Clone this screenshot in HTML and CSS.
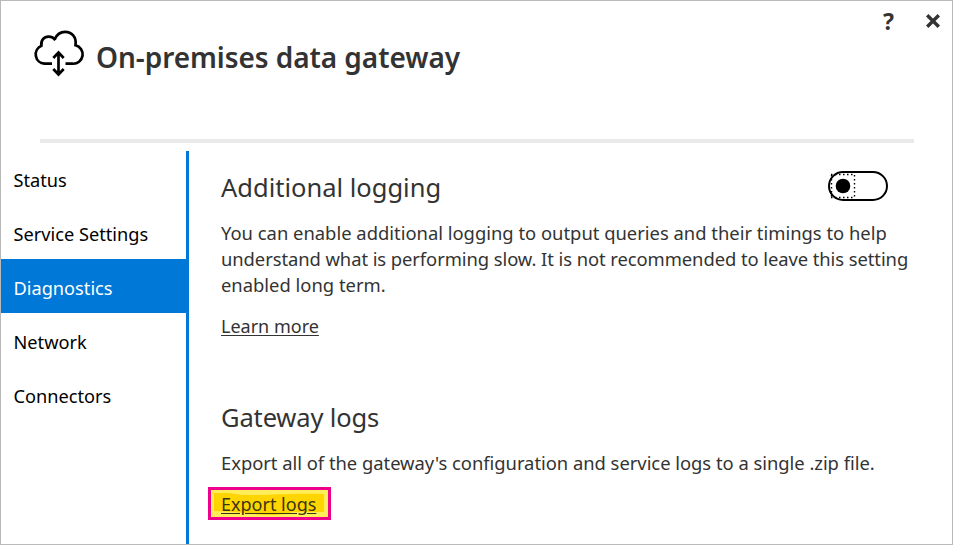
FILE: index.html
```html
<!DOCTYPE html>
<html lang="en"><head><meta charset="utf-8"><title>On-premises data gateway</title><link rel="stylesheet" href="styles.css"></head>
<body>
<div class="window">
<header class="header">
<svg class="cloud" viewBox="0 0 52 48" width="52" height="48"><path d="M19 34.700H11.500A9.400 9.400 0 0 1 8.400 16.700C7.600 11.500 11 7.600 15.500 7.600C18.600 7.600 20.800 8.700 22.300 11.200M21.600 10.400C24 5 27.500 2.900 32 2.900C38.500 2.900 43.800 8 42.500 16.200A9.400 9.400 0 0 1 39.500 34.700H32.500M25.500 24V45M20.300 29L25.500 23.500L30.700 29M20.300 40L25.500 45.500L30.700 40"/></svg>
<h1 class="title">On-premises data gateway</h1>
<div class="actions"><span class="help">?</span>
<svg class="close" viewBox="0 0 14 14" width="14" height="14"><path d="M1.200 1.200L12.800 12.800M12.800 1.200L1.200 12.800"/></svg></div>
</header>
<hr class="rule">
<div class="body">
<nav class="nav"><a>Status</a><a>Service Settings</a><a class="active">Diagnostics</a><a>Network</a><a>Connectors</a></nav>
<main class="main">
<section class="logging"><div class="row"><h2>Additional logging</h2><svg class="toggle" viewBox="0 0 60 30" width="60" height="30"><rect x="1" y="1" width="58" height="28" rx="14"/><path class="focus" d="M3 3.500H27M26.500 4V27M3 26.500H27M3.500 4V27"/><circle cx="15" cy="15" r="7.300"/></svg></div>
<p>You can enable additional logging to output queries and their timings to help<br><span class="tight">understand what is performing slow. It is not recommended to leave this setting</span><br>enabled long term.</p>
<a class="link learn">Learn more</a></section>
<section class="logs"><h2 class="narrow">Gateway logs</h2>
<p class="single">Export all of the gateway's configuration and service logs to a single .zip file.</p>
<div class="mark"><svg class="marker" viewBox="0 0 117 27" width="117" height="27"><path d="M3 3H17C24 4 30 5 42 5C65 5 82 3 113 4V22H81C76 24 68 25 60 25C45 25 35 22 3 21Z"/></svg><a class="link export">Export logs</a></div></section>
</main></div></div>
</body></html>
```
FILE: styles.css
```css
*{box-sizing:border-box}
body{margin:0;font-family:"Noto Sans","Open Sans",sans-serif;color:#333;background:#fff}
.window{width:953px;height:545px;border:1px solid #b9b9b9;overflow:hidden}
.header{height:138px;display:flex;padding:28px 12px 0 32px}
.cloud{fill:none;stroke:#000;stroke-width:2.7}
.title{margin:7px 0 0 11px;font-size:28px;line-height:42px;font-weight:600;letter-spacing:-.06px;white-space:nowrap}
.actions{margin:-22px 0 0 auto;display:flex;gap:32px;height:28px;align-items:center}
.help{font-weight:700;font-size:23px;line-height:28px;color:#333}
.close{fill:none;stroke:#333;stroke-width:3.4}
.rule{margin:0 38px 0 39px;height:4px;border:0;background:#eaeaea}
.body{display:flex;padding-top:8px;height:404px}
.nav{flex:none;width:188px;border-right:3px solid #0078d7}
.nav a{display:block;height:54px;line-height:58px;padding-left:12.5px;font-size:18.2px;color:#000;white-space:nowrap}
.nav .active{background:#0078d7;color:#fff}
.main{padding:17px 64px 0 32px;flex:1;min-width:0}
.row{display:flex;justify-content:space-between;height:40px}
h2{font-size:25.5px;font-weight:400;line-height:38px;margin:0;white-space:nowrap}
.narrow{height:40px;line-height:40px;letter-spacing:-.15px}
p{margin:12px 0 0;font-size:18.4px;line-height:26px;white-space:nowrap}
.tight{letter-spacing:-.07px}
.single{margin-top:13px;letter-spacing:-.025px}
.link{display:inline-block;font-size:18px;line-height:26px;text-decoration:underline;text-underline-offset:2px;white-space:nowrap}
.learn{margin-top:15px}
.toggle{fill:#fff;stroke:#000;stroke-width:2;margin-top:3px}
.toggle circle{fill:#000;stroke:none}
.toggle .focus{stroke-width:1.4;stroke-dasharray:1.5 2.5}
.logs{margin-top:58px}
.mark{position:relative;margin:11px 0 0 -13px;width:123px;height:33px;border:3px solid #ec008c;background:#ffee59;padding:1px 10px}
.marker{position:absolute;left:0;top:0;fill:#ffd500}
.export{position:relative;color:#3a3512}
```
